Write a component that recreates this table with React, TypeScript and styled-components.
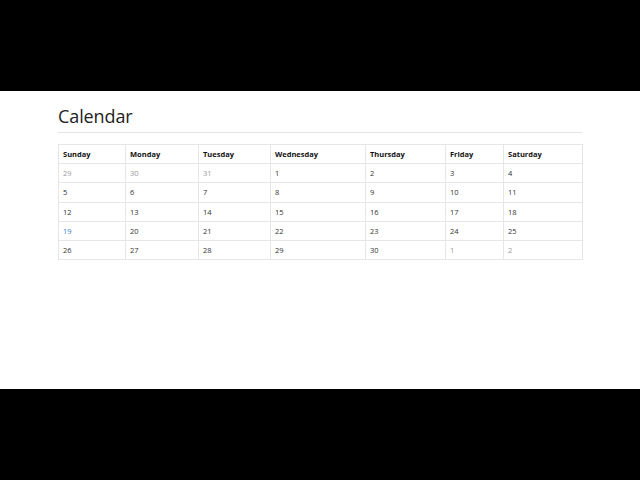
import React from "react";
import styled, { createGlobalStyle } from "styled-components";

const Global = createGlobalStyle`
  html, body { margin: 0; padding: 0; background: #000; }
  body { font-family: "Open Sans", "Noto Sans", sans-serif; color: #333; }
`;

const Page = styled.div`
  display: flex;
  flex-direction: column;
  width: 640px;
  height: 480px;
`;

const Bar = styled.div`
  height: 91px;
  background: #000;
  flex: none;
`;

const Content = styled.main`
  height: 298px;
  background: #fff;
  padding: 0 58px;
  box-sizing: border-box;
`;

const Title = styled.h1`
  margin: 0;
  padding-top: 13px;
  font-size: 18px;
  font-weight: 400;
  line-height: 24px;
  color: #222;
  letter-spacing: -0.1px;
`;

const Rule = styled.hr`
  margin: 4px 0 11px;
  border: 0;
  border-top: 1px solid #e3e3e3;
`;

const Table = styled.table`
  width: 524px;
  border-collapse: collapse;
  table-layout: fixed;
  font-size: 7.5px;
`;

const Th = styled.th`
  text-align: left;
  font-weight: 700;
  color: #111;
  height: 18.2px;
  padding: 0 4px;
  border: 1px solid #e6e6e6;
`;

const Td = styled.td<{ $tone: "muted" | "normal" | "today" }>`
  height: 18.2px;
  padding: 0 4px;
  border: 1px solid #e6e6e6;
  color: ${(p) => (p.$tone === "muted" ? "#999" : p.$tone === "today" ? "#3a7bbf" : "#333")};
`;

const days = [
  { name: "Sunday", w: 67 },
  { name: "Monday", w: 73 },
  { name: "Tuesday", w: 72 },
  { name: "Wednesday", w: 95 },
  { name: "Thursday", w: 80 },
  { name: "Friday", w: 58 },
  { name: "Saturday", w: 79 },
];

type Tone = "muted" | "normal" | "today";
type Cell = { d: number; tone: Tone };

const all: Cell[] = [
  ...[29, 30, 31].map((d) => ({ d, tone: "muted" as Tone })),
  ...Array.from({ length: 30 }, (_, i) => ({
    d: i + 1,
    tone: (i + 1 === 19 ? "today" : "normal") as Tone,
  })),
  ...[1, 2].map((d) => ({ d, tone: "muted" as Tone })),
];

const rows: Cell[][] = [];
for (let i = 0; i < all.length; i += 7) rows.push(all.slice(i, i + 7));

export default function App() {
  return (
    <>
      <Global />
      <Page>
        <Bar />
        <Content>
          <Title>Calendar</Title>
          <Rule />
          <Table>
            <colgroup>
              {days.map((d) => (
                <col key={d.name} style={{ width: d.w }} />
              ))}
            </colgroup>
            <thead>
              <tr>
                {days.map((d) => (
                  <Th key={d.name}>{d.name}</Th>
                ))}
              </tr>
            </thead>
            <tbody>
              {rows.map((r, i) => (
                <tr key={i}>
                  {r.map((c, j) => (
                    <Td key={j} $tone={c.tone}>
                      {c.d}
                    </Td>
                  ))}
                </tr>
              ))}
            </tbody>
          </Table>
        </Content>
        <Bar />
      </Page>
    </>
  );
}
